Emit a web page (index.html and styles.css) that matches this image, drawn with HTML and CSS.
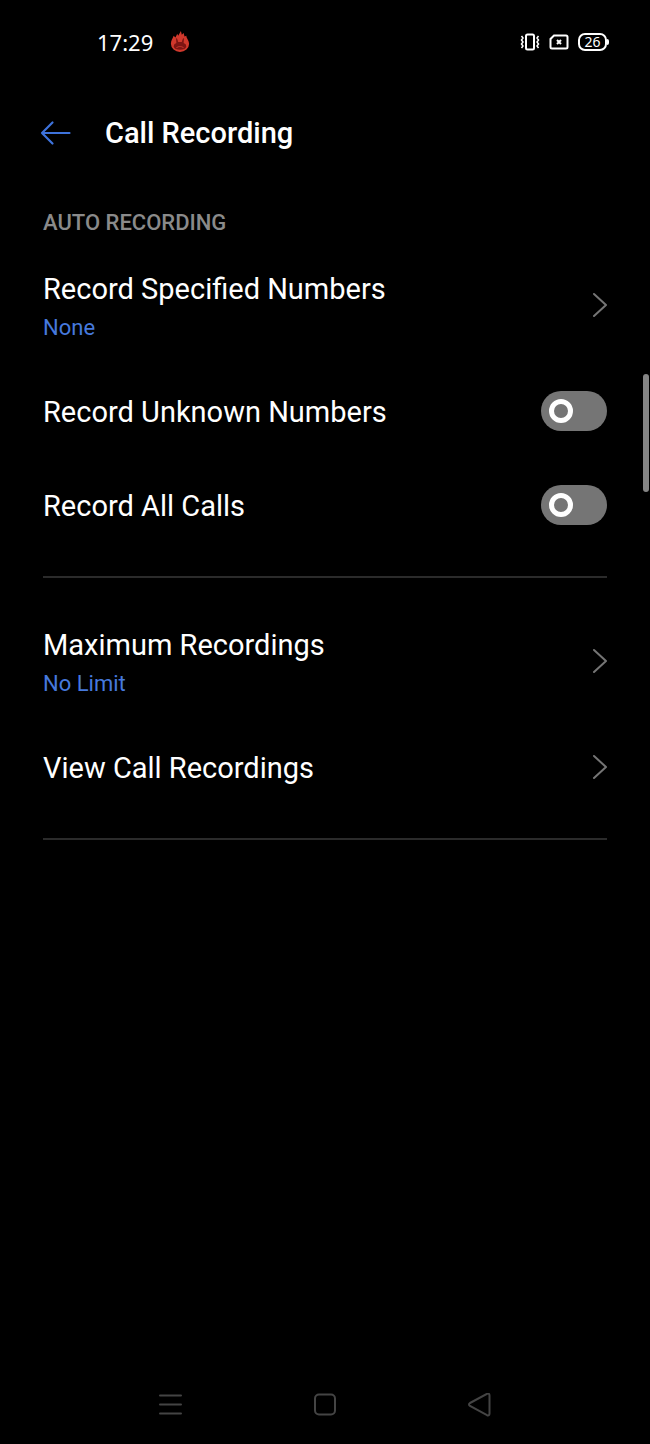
FILE: index.html
```html
<!DOCTYPE html>
<html lang="en">
<head>
<meta charset="utf-8">
<meta name="viewport" content="width=device-width, initial-scale=1">
<title>Call Recording</title>
<link rel="stylesheet" href="styles.css">
</head>
<body>
<div class="screen">
  <div class="status">
    <time class="clock">17:29</time>
    <svg class="flame" width="20" height="22" viewBox="0 0 22 24" aria-hidden="true">
      <path fill="#d0382c" d="M1 14C1 10 3 8 4 5L6 7 8 3 9 5 12 0 13 4 15 2 16 6 18 5C18 8 21 10 21 14A10 9 0 0 1 1 14Z"/>
      <path fill="#7d1513" d="M6.500 8Q8 7 9 12H13Q14 7 15.500 8L15 13Q18 14 18 17 17 20.500 11 20.500T4 17Q4 14 7 13Z"/>
      <path fill="none" stroke="#b93128" stroke-width="1.200" d="M7 18.500Q11 15.500 15 18.500"/>
    </svg>
    <div class="indicators">
      <svg width="20" height="18" viewBox="0 0 20 18" fill="none" stroke="#fff" aria-hidden="true">
        <rect x="6" y="1.500" width="8" height="15" rx="1.500" stroke-width="2"/>
        <path stroke-width="1.500" d="M1.500 3l1.500 2-1.500 2 1.500 2-1.500 2 1.500 2-1.500 2M18.500 3l-1.500 2 1.500 2-1.500 2 1.500 2-1.500 2 1.500 2"/>
      </svg>
      <svg width="20" height="16" viewBox="0 0 20 16" fill="none" stroke="#fff" stroke-width="2" aria-hidden="true">
        <path d="M5 1.500H17Q18.500 1.500 18.500 3V13Q18.500 14.500 17 14.500H3Q1.500 14.500 1.500 13V5Z"/>
        <path d="M8 6l4 4M12 6l-4 4"/>
      </svg>
      <div class="battery"><span class="level">26</span><i class="tip"></i></div>
    </div>
  </div>

  <header class="header">
    <button class="back" aria-label="Back">
      <svg width="32" height="26" viewBox="0 0 32 26" fill="none" stroke="#3e73dc" stroke-width="2.200" stroke-linecap="round" stroke-linejoin="round"><path d="M29.500 13H2M12.500 2.500L2 13 12.500 23.500"/></svg>
    </button>
    <h1 class="title">Call Recording</h1>
  </header>

  <main class="settings">
    <h2 class="section">AUTO RECORDING</h2>
    <button class="row row-tall">
      <span class="text"><span class="name">Record Specified Numbers</span><span class="value">None</span></span>
      <svg class="chevron" width="16" height="26" viewBox="0 0 16 26"><path d="M3 2L15 13 3 24"/></svg>
    </button>
    <label class="row"><span class="name">Record Unknown Numbers</span><input class="switch" type="checkbox" role="switch"></label>
    <label class="row"><span class="name">Record All Calls</span><input class="switch" type="checkbox" role="switch"></label>
    <hr class="divider">
    <button class="row row-tall">
      <span class="text"><span class="name">Maximum Recordings</span><span class="value">No Limit</span></span>
      <svg class="chevron" width="16" height="26" viewBox="0 0 16 26"><path d="M3 2L15 13 3 24"/></svg>
    </button>
    <button class="row">
      <span class="name">View Call Recordings</span>
      <svg class="chevron" width="16" height="26" viewBox="0 0 16 26"><path d="M3 2L15 13 3 24"/></svg>
    </button>
    <hr class="divider">
  </main>

  <nav class="navbar">
    <button class="key" aria-label="Recent apps"><svg width="24" height="24" viewBox="0 0 24 24"><path d="M1 2.500H22M1 11.500H22M1 20.500H22"/></svg></button>
    <button class="key" aria-label="Home"><svg width="24" height="24" viewBox="0 0 24 24"><rect x="2" y="1.500" width="20" height="20" rx="4"/></svg></button>
    <button class="key" aria-label="Back"><svg width="24" height="24" viewBox="0 0 24 24"><path d="M3 10L20 .800Q22.500 0 22.500 2.500V20.500Q22.500 23 20 22.200L3 13Q1 11.500 3 10Z"/></svg></button>
  </nav>
  <div class="scrollbar"></div>
</div>
</body>
</html>
```
FILE: styles.css
```css
*, *::before { box-sizing: border-box; }
body {
  margin: 0;
  background: #000;
  color: #fff;
  font-family: Roboto, "Liberation Sans", sans-serif;
}
button {
  padding: 0;
  border: 0;
  background: none;
  color: inherit;
  font: inherit;
  text-align: left;
  cursor: pointer;
}
svg { display: block; flex: none; }
.screen {
  position: relative;
  display: flex;
  flex-direction: column;
  min-height: 100vh;
}
.status {
  display: flex;
  align-items: center;
  height: 84px;
  padding: 0 41px 0 97px;
}
.clock {
  font-family: "Noto Sans", sans-serif;
  font-size: 22px;
  line-height: 28px;
}
.flame { margin-left: 17px; }
.indicators {
  display: flex;
  align-items: center;
  gap: 9px;
  margin-left: auto;
}
.battery { display: flex; align-items: center; }
.level {
  width: 29px;
  border: 2px solid #fff;
  border-radius: 7px;
  font-family: "Noto Sans", sans-serif;
  font-size: 14px;
  line-height: 14px;
  text-align: center;
}
.tip {
  width: 2px;
  height: 6px;
  border-radius: 0 2px 2px 0;
  background: #fff;
}
.header {
  display: flex;
  align-items: center;
  gap: 33px;
  height: 97px;
  padding: 0 40px;
}
.title {
  margin: 0;
  font-size: 29px;
  font-weight: 500;
  line-height: 36px;
}
.settings { padding: 30px 43px 0; }
.section {
  margin: 0 0 11px;
  color: #8a8a8a;
  font-size: 22px;
  font-weight: 500;
  line-height: 24px;
}
.row {
  display: flex;
  align-items: center;
  justify-content: space-between;
  width: 100%;
  min-height: 94px;
}
.row-tall { min-height: 118px; }
.text { display: flex; flex-direction: column; gap: 8px; }
.name { padding-top: 2px; font-size: 29px; line-height: 36px; }
.value { color: #4679dd; font-size: 22px; line-height: 26px; }
.chevron {
  fill: none;
  stroke: #757575;
  stroke-width: 2;
  stroke-linecap: round;
  stroke-linejoin: round;
}
.switch {
  appearance: none;
  display: flex;
  align-items: center;
  width: 66px;
  height: 40px;
  margin: 0;
  padding: 0 8px;
  border-radius: 20px;
  background: #757575;
}
.switch::before {
  content: "";
  width: 24px;
  height: 24px;
  border: 5px solid #fff;
  border-radius: 50%;
}
.switch:checked { justify-content: flex-end; background: #3e73dc; }
.divider {
  height: 2px;
  margin: 24px 0;
  border: 0;
  background: #2b2b2b;
}
.navbar {
  display: flex;
  justify-content: center;
  gap: 130px;
  margin-top: auto;
  padding-bottom: 27px;
}
.key svg { fill: none; stroke: #444; stroke-width: 2; stroke-linecap: round; }
.scrollbar {
  position: absolute;
  top: 374px;
  right: 1px;
  width: 6px;
  height: 118px;
  border-radius: 3px;
  background: #858585;
}
```
